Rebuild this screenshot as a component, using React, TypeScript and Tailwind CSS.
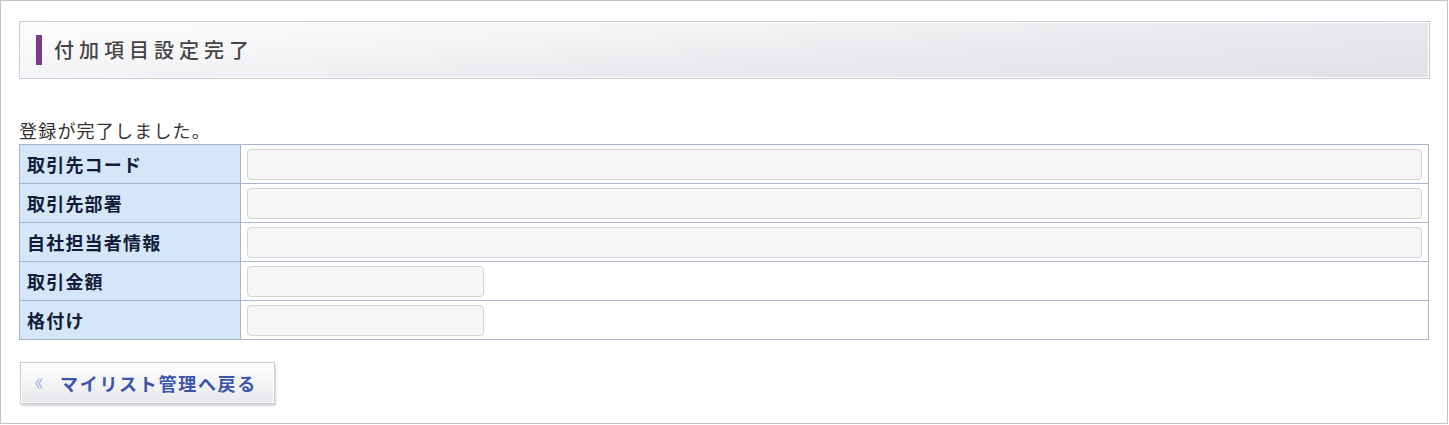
const rows = [
  { label: '取引先コード', wide: true },
  { label: '取引先部署', wide: true },
  { label: '自社担当者情報', wide: true },
  { label: '取引金額', wide: false },
  { label: '格付け', wide: false },
]

const jp = { fontFamily: '"Noto Sans CJK JP", "Noto Sans", sans-serif' }

export default function App() {
  return (
    <div
      className="w-[1448px] h-[424px] border border-[#c4c4c4] bg-white pl-[18px] pt-[20px]"
      style={jp}
    >
      {/* 見出し */}
      <div className="w-[1411px] h-[58px] border border-[#c6cad8] p-px">
        <div className="h-full flex items-center bg-[linear-gradient(176deg,#fdfdfe_0%,#f4f4f6_35%,#e9eaed_60%,#e1e2e6_100%)]">
          <span className="ml-[15px] w-[6px] h-[30px] bg-[#7b3a8a]" />
          <h1 className="ml-[12px] text-[20px] font-medium leading-none tracking-[5px] text-[#444]">
            付加項目設定完了
          </h1>
        </div>
      </div>

      <p className="mt-[41px] h-[24px] text-[18px] leading-[20px] tracking-[1.2px] text-[#333]">
        登録が完了しました。
      </p>

      <table className="w-[1410px] border-collapse">
        <tbody>
          {rows.map(({ label, wide }) => (
            <tr key={label} className="h-[39px]">
              <th className="w-[221px] border border-[#a9b5c9] bg-[#d4e6f7] pl-[7px] text-left text-[18px] font-bold tracking-[1.2px] text-[#121c3a]">
                {label}
              </th>
              <td className="border border-[#a9b5c9] px-[6px] py-0">
                <div
                  className={`h-[31px] rounded-[4px] border border-[#d4d4d4] bg-[#f6f6f6] ${
                    wide ? 'w-full' : 'w-[237px]'
                  }`}
                />
              </td>
            </tr>
          ))}
        </tbody>
      </table>

      <button className="mt-[22px] ml-px w-[255px] h-[42px] border border-[#c9ccd9] p-px shadow-[1px_2px_2px_rgba(0,0,0,0.18)]">
        <span className="h-full flex items-center bg-[linear-gradient(180deg,#fdfdfe_0%,#f3f3f5_55%,#e6e7ea_100%)]">
          <svg className="ml-[13px]" width="8" height="11" viewBox="0 0 8 11" fill="none" stroke="#9fb0e0" strokeWidth="1.3">
            <path d="M4 0.5 L1 5.5 L4 10.5" />
            <path d="M7 0.5 L4 5.5 L7 10.5" />
          </svg>
          <span className="ml-[17px] text-[18px] font-bold leading-none tracking-[1.7px] text-[#3b55ad]">
            マイリスト管理へ戻る
          </span>
        </span>
      </button>
    </div>
  )
}
